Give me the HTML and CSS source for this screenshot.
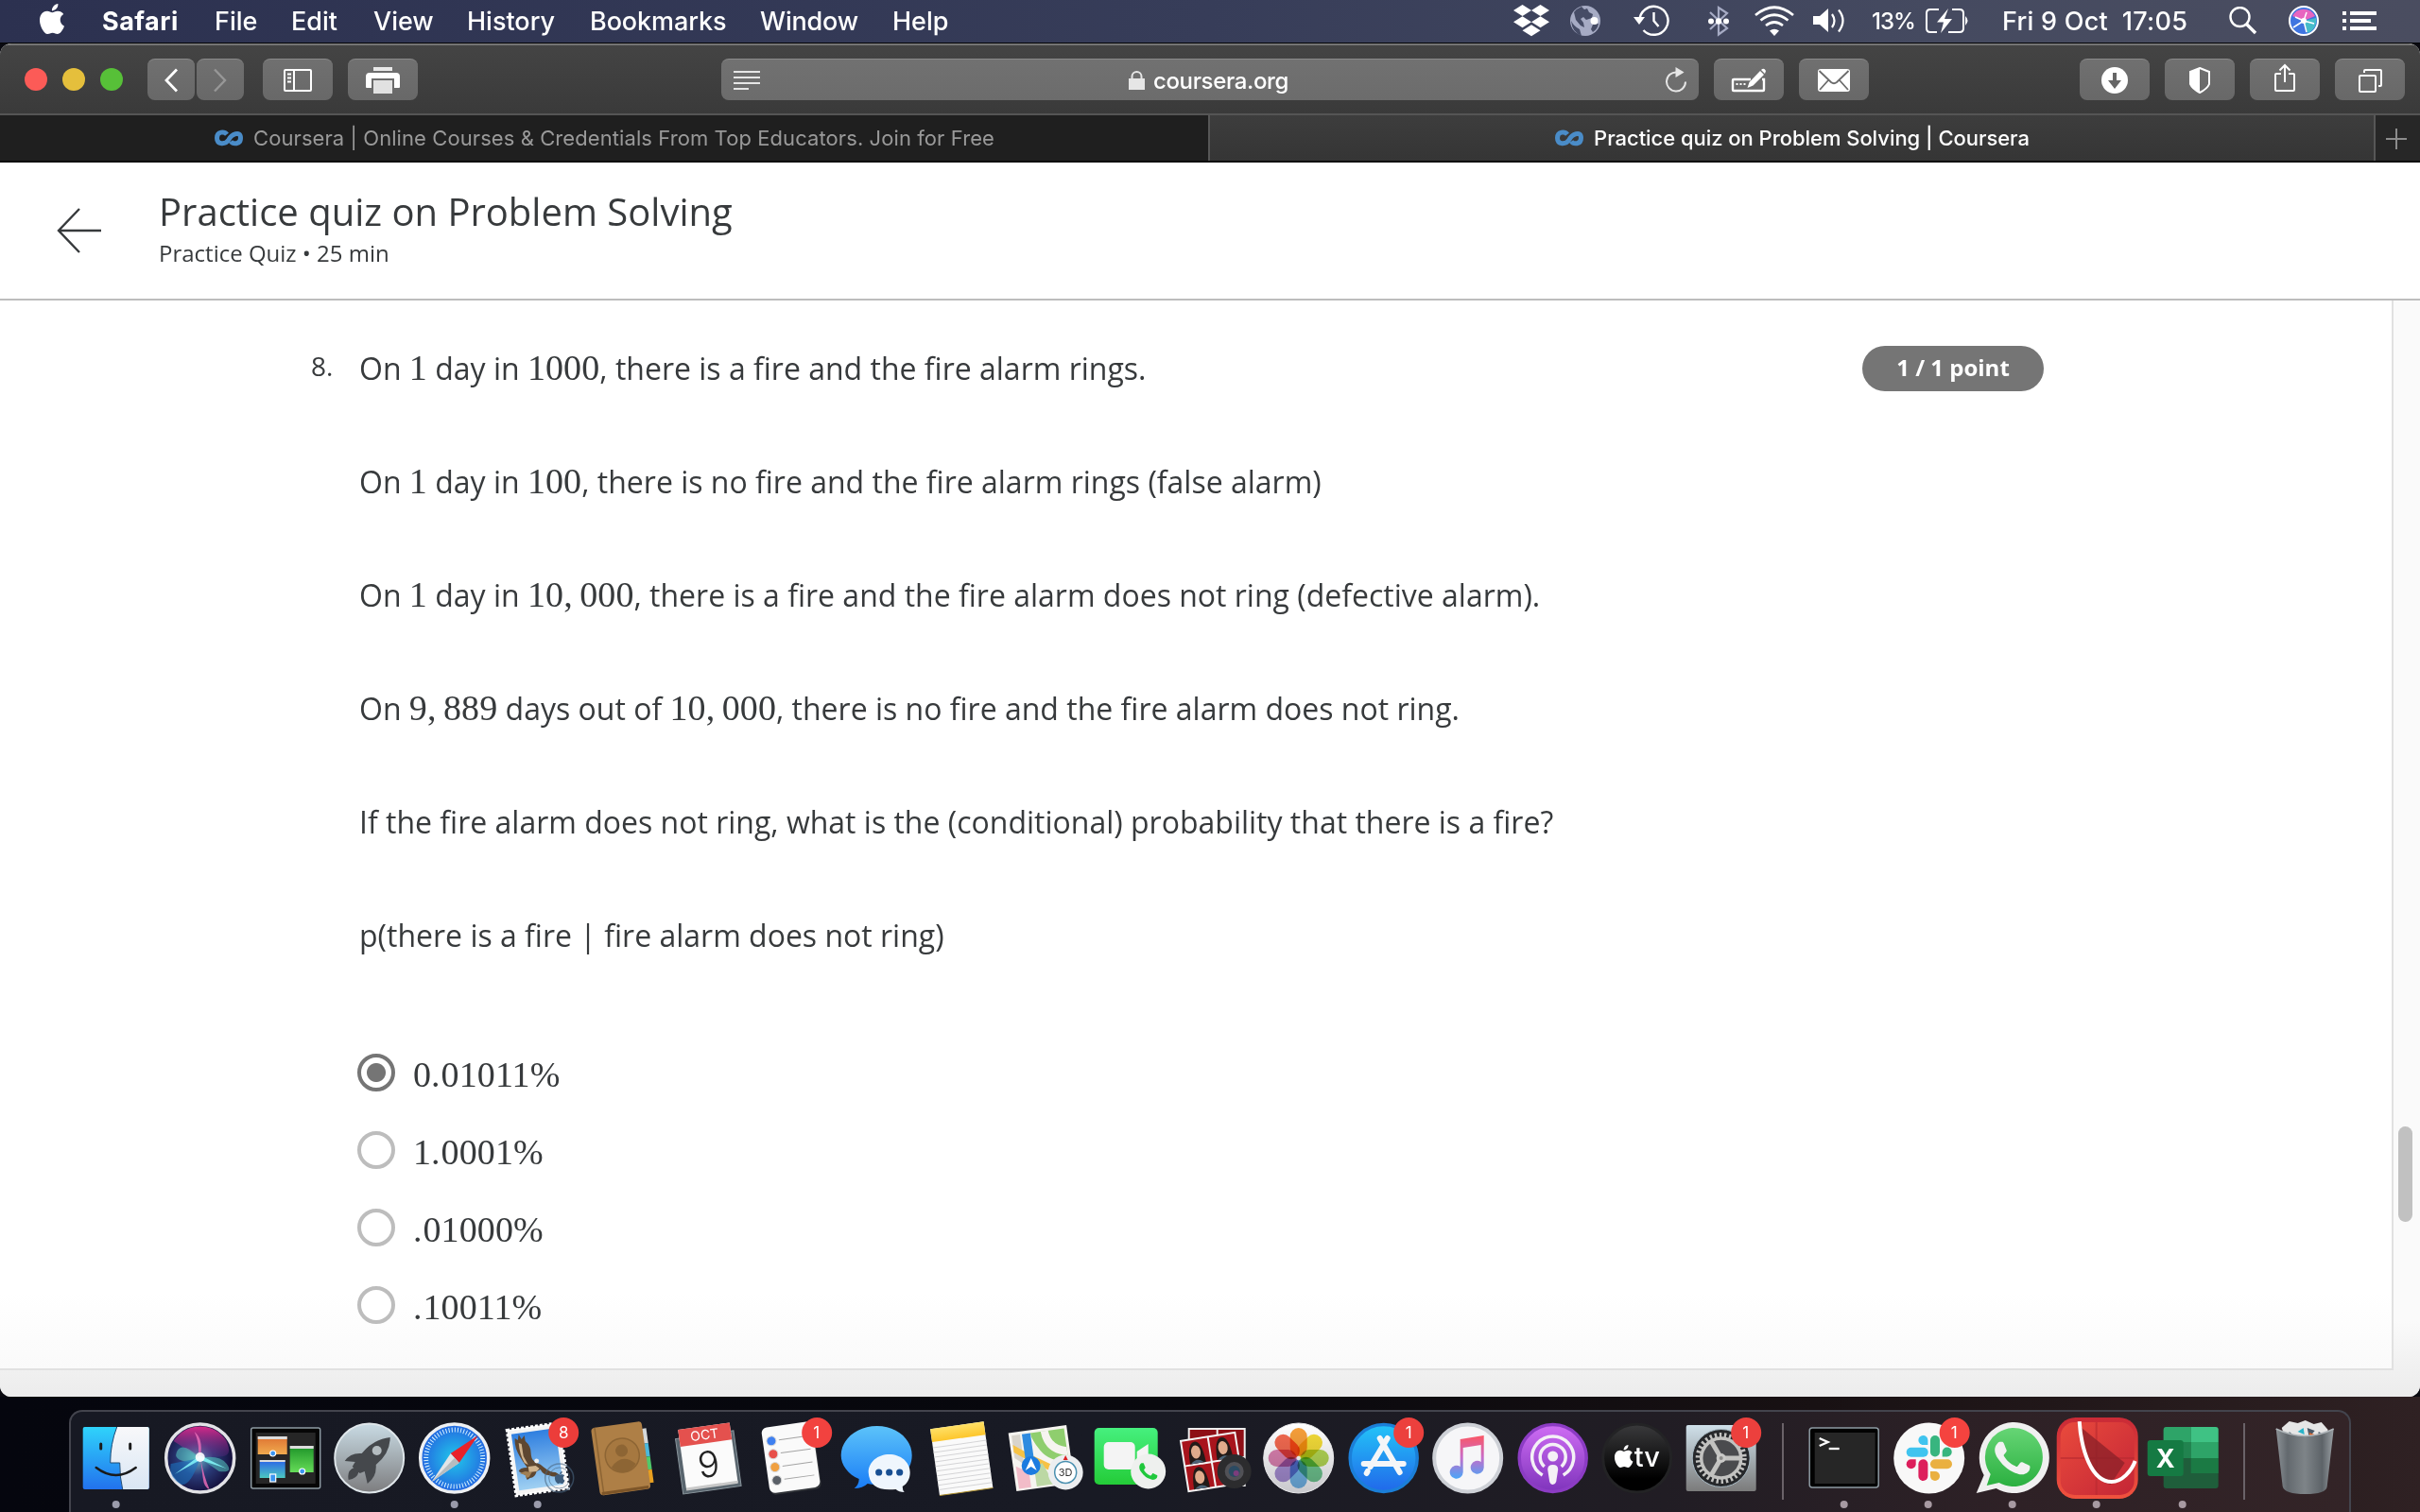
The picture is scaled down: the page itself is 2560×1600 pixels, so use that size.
FILE: index.html
```html
<!DOCTYPE html>
<html lang="en">
<head>
<meta charset="utf-8">
<title>Practice quiz on Problem Solving | Coursera</title>
<link rel="stylesheet" href="styles.css">
</head>
<body>
<svg class="defs" width="0" height="0" aria-hidden="true">
  <defs>
    <path id="apple" d="M12.152 6.896c-.948 0-2.415-1.078-3.96-1.04-2.04.027-3.91 1.183-4.961 3.014-2.117 3.675-.546 9.103 1.519 12.09 1.013 1.454 2.208 3.09 3.792 3.039 1.52-.065 2.09-.987 3.935-.987 1.831 0 2.35.987 3.96.948 1.637-.026 2.676-1.48 3.676-2.948 1.156-1.688 1.636-3.325 1.662-3.415-.039-.013-3.182-1.221-3.22-4.857-.026-3.04 2.48-4.494 2.597-4.559-1.429-2.09-3.623-2.324-4.39-2.376-2-.156-3.675 1.09-4.61 1.09zM15.53 3.83c.843-1.012 1.4-2.427 1.245-3.83-1.207.052-2.662.805-3.532 1.818-.78.896-1.454 2.338-1.273 3.714 1.338.104 2.715-.688 3.559-1.701"/>
    <path id="phone" d="M17.472 14.382c-.297-.149-1.758-.867-2.03-.967-.273-.099-.471-.148-.67.15-.197.297-.767.966-.94 1.164-.173.199-.347.223-.644.075-.297-.15-1.255-.463-2.39-1.475-.883-.788-1.48-1.761-1.653-2.059-.173-.297-.018-.458.13-.606.134-.133.298-.347.446-.52.149-.174.198-.298.298-.497.099-.198.05-.371-.025-.52-.075-.149-.669-1.612-.916-2.207-.242-.579-.487-.5-.669-.51-.173-.008-.371-.01-.57-.01-.198 0-.52.074-.792.372-.272.297-1.04 1.016-1.04 2.479 0 1.462 1.065 2.875 1.213 3.074.149.198 2.096 3.2 5.077 4.487.709.306 1.262.489 1.694.625.712.227 1.36.195 1.871.118.571-.085 1.758-.719 2.006-1.413.248-.694.248-1.289.173-1.413-.074-.124-.272-.198-.57-.347"/>
    <symbol id="coursera" viewBox="0 0 31 18"><path d="M13.5 5.2C11 2 3 1.6 3 9c0 7.400 9 7.200 12.300 2C18.500 5 28 .8 28 9c0 7.200-8 6.800-10.300 3.600" fill="none" stroke="#4a8cc8" stroke-width="5"/></symbol>
    <linearGradient id="gSilver" x1="0" y1="0" x2="0" y2="1"><stop offset="0" stop-color="#fff"/><stop offset="1" stop-color="#c8c8cc"/></linearGradient>
    <linearGradient id="gFinder" x1="0" y1="0" x2="0" y2="1"><stop offset="0" stop-color="#2fd3fb"/><stop offset="1" stop-color="#2272ee"/></linearGradient>
    <linearGradient id="gFace" x1="0" y1="0" x2="0" y2="1"><stop offset="0" stop-color="#f8f8fa"/><stop offset="1" stop-color="#d9e6f4"/></linearGradient>
    <radialGradient id="gSiri" cx=".45" cy=".5" r=".55"><stop offset="0" stop-color="#6fb6c8"/><stop offset=".45" stop-color="#2b3c7a"/><stop offset="1" stop-color="#120b36"/></radialGradient>
    <linearGradient id="gPink" x1="0" y1="0" x2="0" y2="1"><stop offset="0" stop-color="#d62a8a"/><stop offset="1" stop-color="#5a2a86" stop-opacity=".3"/></linearGradient>
    <linearGradient id="gOrange" x1="0" y1="0" x2="0" y2="1"><stop offset="0" stop-color="#de7232"/><stop offset="1" stop-color="#f0ab4e"/></linearGradient>
    <linearGradient id="gGreen" x1="0" y1="0" x2="0" y2="1"><stop offset="0" stop-color="#1d9328"/><stop offset="1" stop-color="#66dc58"/></linearGradient>
    <linearGradient id="gTeal" x1="0" y1="0" x2="0" y2="1"><stop offset="0" stop-color="#2a63e8"/><stop offset="1" stop-color="#4cc8c0"/></linearGradient>
    <linearGradient id="gLaunch" x1="0" y1="0" x2="0" y2="1"><stop offset="0" stop-color="#c9dbe4"/><stop offset="1" stop-color="#7d7d7f"/></linearGradient>
    <radialGradient id="gSafari"><stop offset="0" stop-color="#21c8ea"/><stop offset="1" stop-color="#2366e0"/></radialGradient>
    <linearGradient id="gSky" x1="0" y1="0" x2="0" y2="1"><stop offset="0" stop-color="#2f7fe0"/><stop offset="1" stop-color="#9fd0f2"/></linearGradient>
    <linearGradient id="gBubble" x1="0" y1="0" x2="0" y2="1"><stop offset="0" stop-color="#5cc3fa"/><stop offset="1" stop-color="#1a7df6"/></linearGradient>
    <linearGradient id="gYellow" x1="0" y1="0" x2="0" y2="1"><stop offset="0" stop-color="#ffe066"/><stop offset="1" stop-color="#fdc62c"/></linearGradient>
    <linearGradient id="gFt" x1="0" y1="0" x2="0" y2="1"><stop offset="0" stop-color="#46f07e"/><stop offset="1" stop-color="#24cc38"/></linearGradient>
    <linearGradient id="gStore" x1="0" y1="0" x2="0" y2="1"><stop offset="0" stop-color="#23c4f8"/><stop offset="1" stop-color="#2168ea"/></linearGradient>
    <linearGradient id="gNote" x1="0" y1="0" x2="0" y2="1"><stop offset="0" stop-color="#fb5664"/><stop offset=".5" stop-color="#c96cc8"/><stop offset="1" stop-color="#4aa6f8"/></linearGradient>
    <linearGradient id="gPod" x1="0" y1="0" x2="0" y2="1"><stop offset="0" stop-color="#cf6df4"/><stop offset="1" stop-color="#7f34bc"/></linearGradient>
    <linearGradient id="gTv" x1="0" y1="0" x2="0" y2="1"><stop offset="0" stop-color="#3a3a3c"/><stop offset=".8" stop-color="#000"/></linearGradient>
    <linearGradient id="gPrefs" x1="0" y1="0" x2="0" y2="1"><stop offset="0" stop-color="#cfe0ea"/><stop offset="1" stop-color="#7b7b7b"/></linearGradient>
    <linearGradient id="gWa" x1="0" y1="0" x2="0" y2="1"><stop offset="0" stop-color="#66d575"/><stop offset="1" stop-color="#2bb040"/></linearGradient>
    <linearGradient id="gRed" x1="0" y1="0" x2="1" y2="1"><stop offset="0" stop-color="#e94a3c"/><stop offset="1" stop-color="#c42636"/></linearGradient>
    <linearGradient id="gRedRim" x1="0" y1="0" x2="0" y2="1"><stop offset="0" stop-color="#c92a36"/><stop offset="1" stop-color="#f0523e"/></linearGradient>
    <linearGradient id="gBin" x1="0" y1="0" x2="1" y2="0"><stop offset="0" stop-color="#8c9297"/><stop offset=".2" stop-color="#63696e"/><stop offset=".5" stop-color="#7e8488"/><stop offset=".8" stop-color="#5d6368"/><stop offset="1" stop-color="#9aa0a4"/></linearGradient>
  </defs>
</svg>

<header class="menubar">
  <svg class="apple" width="32" height="32" viewBox="0 0 24 24" fill="#fff"><use href="#apple"/></svg>
  <nav class="menus">
    <span class="m-safari">Safari</span><span class="m-file">File</span><span class="m-edit">Edit</span><span class="m-view">View</span><span class="m-history">History</span><span class="m-bookmarks">Bookmarks</span><span class="m-window">Window</span><span class="m-help">Help</span>
  </nav>
  <div class="status">
    <svg width="38" height="34" viewBox="0 0 38 34" fill="#fff"><path d="M9.500 0l9.500 6-9.500 6L0 6zM28.500 0L38 6l-9.500 6L19 6zM9.500 12.300l9.500 6-9.500 6-9.500-6zM28.500 12.300l9.500 6-9.500 6-9.500-6zM19 21.300l9.500 6-9.500 6-9.500-6z"/></svg>
    <svg class="s-globe" width="32" height="34" viewBox="0 0 32 34"><circle cx="16" cy="17" r="16" fill="#a6abc4"/><path d="M4 8q3-4 8-6l3 3 3-1 2 4 4 2-1 4-6 2-3-3-3 2 3 4 1 5-4-2-5-6zM22 26l2-5 6-1q-1 6-6 9z" fill="#464c66"/><path d="M1 17q3 6 9 9l2 7Q2 29 1 17z" fill="#464c66"/><circle cx="25.500" cy="17" r="4" fill="#fff"/></svg>
    <svg class="s-time" width="38" height="34" viewBox="0 0 38 34"><path d="M6.500 17a15 15 0 1 1 4 10" fill="none" stroke="#fff" stroke-width="2.400"/><path d="M0 13h12l-6 8z" fill="#fff"/><path d="M21.500 8v9l5 6" fill="none" stroke="#fff" stroke-width="2.400"/></svg>
    <svg class="s-bt" width="22" height="34" viewBox="0 0 22 34"><path d="M2 8l18 17-9 6.500V3l9 6L2 26" fill="none" stroke="#a6abc4" stroke-width="2.200"/><g fill="#fff"><circle cx="3" cy="17.500" r="3"/><circle cx="11" cy="17.500" r="3.200"/><circle cx="19" cy="17.500" r="3"/></g></svg>
    <svg class="s-wifi" width="42" height="32" viewBox="0 0 42 32"><g fill="none" stroke="#fff" stroke-width="2.700"><path d="M1 10q20-16.500 40 0M6.500 15.500q14.500-11.500 29 0M12 21q9-7 18 0"/></g><path d="M16 26.500q5-3.500 10 0L21 32z" fill="#fff"/></svg>
    <svg class="s-vol" width="34" height="26" viewBox="0 0 34 26"><path d="M0 8h7l9-8v25l-9-8H0z" fill="#fff"/><g fill="none" stroke="#fff" stroke-width="2.200"><path d="M20 6q5 7 0 14M27 1.500q9 11 0 23"/></g></svg>
    <span class="pct">13%</span>
    <svg class="s-batt" width="47" height="26" viewBox="0 0 47 26"><path d="M14 1H5Q1 1 1 5v16q0 4 4 4h7M28 1h8q4 0 4 4v16q0 4-4 4H24" fill="none" stroke="#fff" stroke-width="2"/><path d="M24 0L12 14.500h7L16 26l12-15h-8zM42 8q5 4.500 0 10z" fill="#fff"/></svg>
    <span class="clock">Fri 9 Oct&nbsp; 17:05</span>
    <svg class="s-search" width="30" height="30" viewBox="0 0 30 30" fill="none" stroke="#fff"><circle cx="11.500" cy="11" r="10" stroke-width="2.400"/><path d="M18 18l10 10" stroke-width="3.400"/></svg>
    <svg class="s-siri" width="32" height="32" viewBox="0 0 32 32"><circle cx="16" cy="16" r="15" fill="#3f74e0" stroke="#fff" stroke-width="2"/><path d="M4 11a13.500 13.500 0 0 1 24 0l-12 5z" fill="#e765c0"/><path d="M29 13a14 14 0 0 1-9 16l-4-13z" fill="#46bcc9"/><path d="M16 16L5 23M16 16L7 12M16 16l3-9M16 16l11 3M16 16l3 12" stroke="#fff" stroke-width="1.500"/><circle cx="16" cy="16" r="3" fill="#fff"/></svg>
    <svg class="s-list" width="36" height="20" viewBox="0 0 36 20" fill="#fff"><path d="M0 0h4v4H0zM8 0h28v4H8zM0 8h4v4H0zM8 8h22v4H8zM0 16h4v4H0zM8 16h28v4H8z"/></svg>
  </div>
</header>

<main class="window">
  <div class="toolbar">
    <i class="light red"></i><i class="light amber"></i><i class="light green"></i>
    <div class="navs">
      <button class="btn small"><svg width="16" height="26" viewBox="0 0 16 26" fill="none" stroke="#fff" stroke-width="2.800"><path d="M14 1.500L3 13l11 11.500"/></svg></button>
      <button class="btn small"><svg width="16" height="26" viewBox="0 0 16 26" fill="none" stroke="#979797" stroke-width="2.400"><path d="M2 1.500L13 13 2 24.500"/></svg></button>
    </div>
    <button class="btn b-side"><svg width="30" height="24" viewBox="0 0 30 24" fill="none" stroke="#fff" stroke-width="2"><rect x="1" y="1" width="28" height="22" rx="1"/><path d="M11 1v22M4 5.500h4M4 9.500h4M4 13.500h4"/></svg></button>
    <button class="btn b-print"><svg width="38" height="30" viewBox="0 0 38 30" fill="#fff"><path d="M9 1h20v4H9z" opacity=".85"/><path d="M5 7h28q4 0 4 4v11q0 1-1 1h-5V13H7v10H2q-1 0-1-1V11q0-4 4-4z"/><path d="M9 15h20v14H9z" opacity=".8"/></svg></button>
    <div class="url">
      <svg width="28" height="20" viewBox="0 0 28 20" fill="#e6e6e6"><path d="M0 0h28v2H0zM0 6h28v2H0zM0 12h28v2H0zM0 18h16v2H0z"/></svg>
      <div class="host"><svg width="17" height="20" viewBox="0 0 17 20"><path d="M0 8h17v12H0z" fill="#e6e6e6"/><path d="M3.500 9V6a5 5 0 0 1 10 0v3" fill="none" stroke="#e6e6e6" stroke-width="2"/></svg><span>coursera.org</span></div>
      <svg width="22" height="27" viewBox="0 0 22 27"><path d="M12 5.500A10 10 0 1 0 21 15.500" fill="none" stroke="#e6e6e6" stroke-width="2"/><path d="M10.500 0v11l9-5.500z" fill="#e6e6e6"/></svg>
    </div>
    <button class="btn b-edit"><svg width="38" height="26" viewBox="0 0 38 26"><path d="M21 12H3q-1 0-1 1v10q0 1 1 1h31q1 0 1-1V12h-2" fill="none" stroke="#fff" stroke-width="2.400"/><path d="M5.500 16h2v2h-2zM9.500 16h2v2h-2zM13.500 16h2v2h-2zM17.500 21l2-6L31 3l4 4-11.500 11.500zM32 2q3-3 5 1l-1 3z" fill="#fff"/></svg></button>
    <button class="btn b-mail"><svg width="34" height="24" viewBox="0 0 34 24"><rect width="34" height="24" rx="3" fill="#fff"/><path d="M1.500 2l12.500 12q3 2.500 6 0L32.500 2M2 22l9-10M32 22l-9-10" fill="none" stroke="#6c6c6c" stroke-width="1.800"/></svg></button>
    <div class="right">
      <button class="btn"><svg width="28" height="28" viewBox="0 0 28 28"><circle cx="14" cy="14" r="14" fill="#fff"/><path d="M12 6h4v8h5l-7 9-7-9h5z" fill="#666"/></svg></button>
      <button class="btn"><svg width="24" height="28" viewBox="0 0 24 28"><path d="M12 1l10 4v13q-2 5-10 9-8-4-10-9V5z" fill="none" stroke="#fff" stroke-width="2"/><path d="M12 1v26q-8-4-10-9V5z" fill="#fff"/></svg></button>
      <button class="btn"><svg class="up" width="24" height="31" viewBox="0 0 24 31" fill="none" stroke="#fff" stroke-width="2"><path d="M8 11H3q-1 0-1 1v16q0 1 1 1h18q1 0 1-1V12q0-1-1-1h-5M12 20V2M6.500 7.500L12 2l5.500 5.500"/></svg></button>
      <button class="btn"><svg width="26" height="26" viewBox="0 0 26 26" fill="none" stroke="#fff" stroke-width="2"><rect x="2" y="8" width="17" height="17" rx="1"/><path d="M7 5V3q0-1 1-1h16q1 0 1 1v15q0 1-1 1h-2"/></svg></button>
    </div>
  </div>
  <div class="tabs">
    <div class="tab"><svg width="32" height="18"><use href="#coursera"/></svg><span class="t1">Coursera | Online Courses &amp; Credentials From Top Educators. Join for Free</span></div>
    <div class="tab active"><svg width="32" height="18"><use href="#coursera"/></svg><span class="t2">Practice quiz on Problem Solving | Coursera</span></div>
    <div class="plus"><svg width="22" height="22" viewBox="0 0 22 22" stroke="#8c8c8c" stroke-width="2"><path d="M11 0v22M0 11h22"/></svg></div>
  </div>
  <div class="quiz-head">
    <svg width="48" height="48" viewBox="0 0 48 48" fill="none" stroke="#373a3c" stroke-width="2.400"><path d="M24 1L2 24l22 23M2 24h45"/></svg>
    <div><h1>Practice quiz on Problem Solving</h1><p>Practice Quiz • 25 min</p></div>
  </div>
  <div class="page">
    <section class="sheet">
      <div class="question">
        <span class="num">8.</span>
        <div class="prompt">
          <p>On <b>1</b> day in <b>1000</b>, there is a fire and the fire alarm rings.</p>
          <p>On <b>1</b> day in <b>100</b>, there is no fire and the fire alarm rings (false alarm)</p>
          <p>On <b>1</b> day in <b>10<i>,</i>000</b>, there is a fire and the fire alarm does not ring (defective alarm).</p>
          <p>On <b>9<i>,</i>889</b> days out of <b>10<i>,</i>000</b>, there is no fire and the fire alarm does not ring.</p>
          <p>If the fire alarm does not ring, what is the (conditional) probability that there is a fire?</p>
          <p>p(there is a fire | fire alarm does not ring)</p>
        </div>
        <span class="points">1 / 1 point</span>
      </div>
      <ul class="options">
        <li><i class="radio on"></i><span>0<i>.</i>01011%</span></li>
        <li><i class="radio"></i><span>1<i>.</i>0001%</span></li>
        <li><i class="radio"></i><span><i>.</i>01000%</span></li>
        <li><i class="radio"></i><span><i>.</i>10011%</span></li>
      </ul>
    </section>
    <aside class="gutter"><div class="thumb"></div></aside>
  </div>
</main>

<footer class="desktop">
  <div class="dock">
    <!-- Finder -->
    <svg class="ic" viewBox="-44.700 -49 89.400 106"><rect x="-35" y="-33" width="70" height="66" rx="2" fill="url(#gFinder)"/><path d="M1-33q-7 18-7 38H4q0 16 3 28h26q2 0 2-2v-62q0-2-2-2z" fill="url(#gFace)"/><path d="M1-33q-7 18-7 38H4q0 16 3 28" fill="none" stroke="#1c4a74" stroke-width="1"/><path d="M-16-15v5M15-15v5" stroke="#1a1a1a" stroke-width="3" stroke-linecap="round"/><path d="M-21 10q21 16 42 0" fill="none" stroke="#1a1a1a" stroke-width="2.500" stroke-linecap="round"/><circle cy="49" r="4" fill="#9a9bab"/></svg>
    <!-- Siri -->
    <svg class="ic" viewBox="-44.700 -49 89.400 106"><circle r="36" fill="url(#gSiri)" stroke="#e2e2e6" stroke-width="3.500"/><path d="M-28-18A33 33 0 0 1 28-18Q34-4 25-2L0 0z" fill="url(#gPink)"/><path d="M0 0Q-18-18-24-8t12 12zM0 0q20-4 28 6t-8 8z" fill="#55c7c0" opacity=".55"/><path d="M0 0Q-10 30-20 28-34 20-31 6z" fill="#1d73c0" opacity=".6"/><path d="M0-2Q4 20 10 33q-6-2-7-12zM0 0Q4-20-6-28 0-14-2 0z" fill="#e66bb6" opacity=".85"/><path d="M-27 17L0-3l28 14L0 2z" fill="#8ff" opacity=".8"/><circle cy="-1" r="5" fill="#fff" opacity=".9"/></svg>
    <!-- Mission Control -->
    <svg class="ic" viewBox="-44.700 -49 89.400 106"><rect x="-36" y="-32" width="73" height="64" rx="2" fill="#060606" stroke="#8d9aa2" stroke-width="1.500"/><rect x="-31" y="-27" width="63" height="54" fill="#262626"/><rect x="-29" y="-23" width="31" height="19" fill="url(#gOrange)"/><path d="M-29-23H2v3h-31z" fill="#ddd"/><rect x="5" y="-13" width="25" height="28" fill="url(#gGreen)"/><path d="M5-13h25v3H5z" fill="#ddd"/><rect x="-27" y="2" width="27" height="19" fill="url(#gTeal)"/><path d="M-27 2H0v2h-27z" fill="#ddd"/><g fill="#3a95f0" stroke="#fff" stroke-width="1.200"><circle cx="-13" cy="-5" r="3"/><circle cx="18" cy="14" r="3"/><rect x="-16" y="17" width="6" height="8"/></g></svg>
    <!-- Launchpad -->
    <svg class="ic" viewBox="-44.700 -49 89.400 106"><circle r="36.500" fill="url(#gLaunch)" stroke="#dfe6ea" stroke-width="2"/><path d="M22-22Q4-20-8-5-20-6-26 3l11 1-3 5 8 7 5-2 3 13Q8 20 7 7 22-5 22-22zM-16 10q-8 3-6 13 9-1 11-9z" fill="#45484c"/><circle cx="8" cy="-8" r="5" fill="#b4bcc0"/></svg>
    <!-- Safari -->
    <svg class="ic" viewBox="-44.700 -49 89.400 106"><circle r="36" fill="url(#gSafari)" stroke="#eef0f2" stroke-width="3.500"/><circle r="30" fill="none" stroke="#d8f2ff" stroke-width="5" stroke-dasharray="1 2.140"/><path d="M25-24L5 5-4-5z" fill="#e8222a"/><path d="M-24 25L-4-5 5 5z" fill="#e2e4e6"/><path d="M-24 25L0 0l5 5z" fill="#b6bcc0"/><circle cy="49" r="4" fill="#9a9bab"/></svg>
    <!-- Mail -->
    <svg class="ic" viewBox="-44.700 -49 89.400 106"><g transform="rotate(-8)"><rect x="-29" y="-34" width="56" height="70" fill="#f4f4f4" stroke="#fff" stroke-width="3" stroke-dasharray="3 2"/><rect x="-25" y="-29" width="47" height="60" fill="url(#gSky)"/></g><path d="M-25-21l3 2 1-6 3 5 3-4 1 6q6 5 6 13 0 5 3 8l3 2q4 1 8 5 6 5 12 5l5 3q-6 3-12 0-6 0-9-6l-4 2q-2 7-7 7l-3 2-2-5-7-4q1-4 9-4-4-5-8-12-6-10-5-19z" fill="#5e4731"/><path d="M-21-16l3 1 2 13 5 9-4-2q-5-9-6-21zM-11 9l8-1 4 3-3 3-8 1z" fill="#d0b48e"/><path d="M-14 14l7 1-3 5-3 1-1-3-6-2z" fill="#a08054"/><circle cx="-2" cy="3" r="2.500" fill="#eee"/><circle cx="22" cy="21" r="15" fill="none" stroke="#4a6580" stroke-width="1.500" opacity=".6"/><circle cx="22" cy="21" r="11" fill="none" stroke="#4a6580" opacity=".6"/><svg x="16" y="14" width="13" height="13" viewBox="0 0 24 24" fill="#3d5c7c"><use href="#apple"/></svg><circle cx="26.500" cy="-27" r="16" fill="#ec3d3a"/><text class="bt" x="26.500" y="-21">8</text><circle cx="-1" cy="49" r="4" fill="#9a9bab"/></svg>
    <!-- Contacts -->
    <svg class="ic" viewBox="-44.700 -49 89.400 106"><g transform="rotate(-8)"><path d="M24-28h5v16h-5z" fill="#d4d8da"/><path d="M24-12h5V2h-5z" fill="#4bb9dc"/><path d="M24 2h5v14h-5z" fill="#50c96a"/><path d="M24 16h5v14h-5z" fill="#e8a020"/><rect x="-29" y="-36" width="54" height="72" rx="4" fill="#ae7f46"/><path d="M-25-36v72" stroke="#8d6534" stroke-width="1.500"/><path d="M-27 34h50" stroke="#7d5528" stroke-width="3"/><circle cy="-3" r="18" fill="#a67840" stroke="#8d6534" stroke-width="1.500"/><circle cy="-8" r="6.500" fill="#8d6534"/><path d="M-13 8q13-14 26 0-6 7-13 7T-13 8z" fill="#8d6534"/></g></svg>
    <!-- Calendar -->
    <svg class="ic" viewBox="-44.700 -49 89.400 106"><g transform="rotate(-8)"><rect x="-31" y="-25" width="62" height="59" fill="#59656e" stroke="#8b979e"/><rect x="-27" y="-34" width="55" height="64" fill="#fbfbfb"/><path d="M-27-34h55v18h-55z" fill="#e4514e"/><path d="M-27 28h55v3h-55z" fill="#c8c8c8"/><text class="oct" x="0" y="-20">OCT</text><text class="day" x="0" y="20">9</text></g></svg>
    <!-- Reminders -->
    <svg class="ic" viewBox="-44.700 -49 89.400 106"><g transform="rotate(-8)"><rect x="-27" y="-34" width="54" height="70" rx="6" fill="#303338"/><rect x="-28" y="-36" width="54" height="70" rx="6" fill="#fafafa"/><path d="M-11-21h32M-11-7h32M-11 7h32M-11 21h32" stroke="#a4a4a4"/><g stroke="#d8d8d8"><circle cx="-19" cy="-21" r="5" fill="#3f80f0"/><circle cx="-19" cy="-7" r="5" fill="#e8504a"/><circle cx="-19" cy="7" r="5" fill="#f0a040"/><circle cx="-19" cy="21" r="5" fill="#5a6068"/></g></g><circle cx="26.500" cy="-27" r="16" fill="#f2423f"/><text class="bt" x="26" y="-21">1</text></svg>
    <!-- Messages -->
    <svg class="ic" viewBox="-44.700 -49 89.400 106"><path d="M0-34c21 0 37 14 37 31S22 28 0 28q-6 0-10-1-5 5-14 5 5-4 5-10C-31 17-38 7-38-3c0-17 17-31 38-31z" fill="url(#gBubble)"/><path d="M13-4c12 0 22 8 22 19 0 7-3 12-8 15q0 4 2 6-6 0-9-3-28 3-29-18C-9 4 1-4 13-4z" fill="#eff6fd"/><g fill="#184f92"><circle cx="2" cy="15" r="3.600"/><circle cx="13" cy="15" r="3.600"/><circle cx="24" cy="15" r="3.600"/></g></svg>
    <!-- Notes -->
    <svg class="ic" viewBox="-44.700 -49 89.400 106"><g transform="rotate(-8)"><rect x="-28" y="-35" width="57" height="71" fill="#fafafa"/><path d="M-28-35h57v14h-57z" fill="url(#gYellow)"/><path d="M-28-15h57M-28-10h57M-28-5h57M-28 0h57M-28 5h57M-28 10h57M-28 15h57M-28 20h57M-28 25h57M-28 30h57" stroke="#d4d4d6"/><path d="M-28 36h57" stroke="#b29330"/></g></svg>
    <!-- Maps -->
    <svg class="ic" viewBox="-44.700 -49 89.400 106"><g transform="translate(-4 0) rotate(-8)"><rect x="-31" y="-31" width="62" height="62" fill="#f6f4f0"/><path d="M-28-28h9v32l-9-8z" fill="#d8d4cc"/><path d="M-28 5l13 8v16h-13z" fill="#f2bcc8"/><path d="M-8-28H28V8Q8 5 0-8t-8-20z" fill="#8fce6e"/><path d="M3-28Q4-4 28 1v-9Q12-12 11-28z" fill="#f6f4f0"/><path d="M-28-18l16 12L28 20v8L-12 2l-16-12z" fill="#f7c244"/><path d="M-17-28h9V6h-9z" fill="#2f8be0"/><path d="M-9 10L0 5l10 24H-9z" fill="#bcd8a4"/></g><circle cx="-15" cy="8" r="10" fill="#1b7be0"/><path d="M-15 0l6 13-6-4-6 4z" fill="#fff"/><circle cx="21.500" cy="15" r="18.500" fill="#eceef0"/><circle cx="21.500" cy="15" r="11.500" fill="#fff" stroke="#4a90b0" stroke-width="1.500"/><path d="M21.500-3l2.500 5h-5z" fill="#d22"/><text class="d3" x="21.500" y="19">3D</text></svg>
    <!-- FaceTime -->
    <svg class="ic" viewBox="-44.700 -49 89.400 106"><rect x="-38" y="-32" width="67" height="60" rx="5" fill="url(#gFt)"/><rect x="-28" y="-17" width="33" height="29" rx="5" fill="#f4f4f4"/><path d="M7-7L19-15v20L7 2z" fill="#f4f4f4"/><circle cx="19" cy="14" r="18.500" fill="#eef0ee"/><svg x="0" y="-5" width="38" height="38" viewBox="0 0 24 24" fill="#1fc83c"><use href="#phone"/></svg></svg>
    <!-- Photo Booth -->
    <svg class="ic" viewBox="-44.700 -49 89.400 106"><rect x="-28" y="-32" width="61" height="62" fill="#eee"/><rect x="-26" y="-30" width="28" height="28" fill="#8e0f16"/><rect x="4" y="-30" width="27" height="28" fill="#8e0f16"/><g transform="translate(-3 3) rotate(-9)"><rect x="-30" y="-27" width="60" height="56" fill="#f4f4f4"/><rect x="-28" y="-25" width="27" height="25" fill="#a8141c"/><rect x="1" y="-25" width="27" height="25" fill="#a8141c"/><rect x="-28" y="2" width="27" height="25" fill="#a8141c"/><rect x="1" y="2" width="27" height="25" fill="#a8141c"/><path d="M-23 0q0-23 8-23t9 23zM6 0q0-23 8-23t9 23zM-23 27q0-23 8-23t9 23z" fill="#231a18"/><g fill="#e0ab8c"><ellipse cx="-15" cy="-12" rx="5" ry="7"/><ellipse cx="14" cy="-12" rx="5" ry="7"/><ellipse cx="-15" cy="15" rx="5" ry="7"/></g><path d="M-22 0q7-7 14 0zM7 0q7-7 14 0zM-22 27q7-7 14 0z" fill="#4c6478"/></g><circle cx="21" cy="14" r="18" fill="#2c2c2e"/><circle cx="21" cy="14" r="10" fill="#515156"/><circle cx="21" cy="14" r="6" fill="#2b4a62"/><circle cx="23" cy="16" r="3" fill="#7c3d7c"/></svg>
    <!-- Photos -->
    <svg class="ic" viewBox="-44.700 -49 89.400 106"><circle r="37" fill="url(#gSilver)" stroke="#e8e8ea"/><g class="petals"><rect x="-9" y="-32" width="18" height="30" rx="9" fill="#f8a03a"/><rect x="-9" y="-32" width="18" height="30" rx="9" fill="#f4dc38" transform="rotate(45)"/><rect x="-9" y="-32" width="18" height="30" rx="9" fill="#b4d854" transform="rotate(90)"/><rect x="-9" y="-32" width="18" height="30" rx="9" fill="#70c890" transform="rotate(135)"/><rect x="-9" y="-32" width="18" height="30" rx="9" fill="#74b8ea" transform="rotate(180)"/><rect x="-9" y="-32" width="18" height="30" rx="9" fill="#a890d4" transform="rotate(225)"/><rect x="-9" y="-32" width="18" height="30" rx="9" fill="#dc82b0" transform="rotate(270)"/><rect x="-9" y="-32" width="18" height="30" rx="9" fill="#f46a50" transform="rotate(315)"/></g></svg>
    <!-- App Store -->
    <svg class="ic" viewBox="-44.700 -49 89.400 106"><circle r="35.500" fill="url(#gStore)" stroke="#1b7fd8" stroke-width="3.500"/><g stroke="#f4f6f8" stroke-width="6" stroke-linecap="round"><path d="M-4-21L17 15M4-21L-14 9M-17 14l-1 2M-21 6H21"/></g><circle cx="26.500" cy="-27" r="16" fill="#ec403d"/><text class="bt" x="26.500" y="-21">1</text></svg>
    <!-- Music -->
    <svg class="ic" viewBox="-44.700 -49 89.400 106"><circle r="35.500" fill="#f6f6f8" stroke="#cdd0d6" stroke-width="4"/><path d="M-8-20l25-4v34a7 7 0 1 1-3-6v-18L-5-11v26a7 7 0 1 1-3-6z" fill="url(#gNote)"/></svg>
    <!-- Podcasts -->
    <svg class="ic" viewBox="-44.700 -49 89.400 106"><circle r="35.500" fill="url(#gPod)" stroke="#8c3cc4" stroke-width="3.500"/><g fill="none" stroke="#f4f0f6" stroke-width="3.500"><path d="M-11 18a22 22 0 1 1 22 0M-9 9a13.500 13.500 0 1 1 18 0"/></g><circle cy="-2" r="5.500" fill="#f4f0f6"/><path d="M-5.500 12q0-5 5.500-5t5.500 5l-2 13q-1 3-3.500 3t-3.500-3z" fill="#f4f0f6"/></svg>
    <!-- TV -->
    <svg class="ic" viewBox="-44.700 -49 89.400 106"><circle r="36" fill="url(#gTv)" stroke="#232325" stroke-width="3"/><svg x="-26" y="-14" width="24" height="24" viewBox="0 0 24 24" fill="#fff"><use href="#apple"/></svg><text class="tv" x="-3" y="9">tv</text></svg>
    <!-- System Preferences -->
    <svg class="ic" viewBox="-44.700 -49 89.400 106"><rect x="-37" y="-35" width="74" height="70" rx="2" fill="url(#gPrefs)"/><circle r="30.500" fill="#26282b" stroke="#a9bac4"/><circle r="21" fill="#4a4b4e" stroke="#c2c2c0" stroke-width="3.500"/><circle r="24.500" fill="none" stroke="#c2c2c0" stroke-width="5" stroke-dasharray="2.400 2.730"/><path d="M0 0h21M0 0l-10.500-18M0 0l-10.500 18" stroke="#c2c2c0" stroke-width="5"/><circle r="5" fill="#c9c9c7"/><circle r="2" fill="#8c8c8a"/><circle cx="26.500" cy="-27" r="16" fill="#ec403d"/><text class="bt" x="26" y="-21">1</text></svg>
    <i class="sep"></i>
    <!-- Terminal -->
    <svg class="ic" viewBox="-44.700 -49 89.400 106"><rect x="-36.500" y="-32" width="73" height="63" rx="3" fill="#020202" stroke="#8d9aa2" stroke-width="1.500"/><rect x="-31" y="-27" width="64" height="54" fill="#262626"/><path d="M-26-21l9 4-9 4" fill="none" stroke="#fff" stroke-width="2.300"/><path d="M-16-10h11" stroke="#fff" stroke-width="2.300"/><circle cx="0" cy="49" r="4" fill="#a79aa2"/></svg>
    <!-- Slack -->
    <svg class="ic" viewBox="-44.700 -49 89.400 106"><circle r="37.500" fill="#f8f8f8"/><g fill="#40c4ef"><rect x="-24" y="-11.300" width="23" height="10" rx="5"/><path d="M-1.300-14h-5a5 5 0 1 1 5-5z"/></g><g fill="#38b57f"><rect x="1.300" y="-24" width="10" height="22.500" rx="5"/><path d="M14-1.500v-5a5 5 0 1 1 5 5z"/></g><g fill="#dd1f5c"><rect x="-11.300" y="1.300" width="10" height="22.700" rx="5"/><path d="M-14 1.300v5a5 5 0 1 1-5-5z"/></g><g fill="#eab040"><rect x="1.300" y="1.300" width="23" height="10" rx="5"/><path d="M1.300 14h5a5 5 0 1 1-5 5z"/></g><circle cx="27" cy="-27" r="16" fill="#f5433f"/><text class="bt" x="26.500" y="-21">1</text><circle cx="-1" cy="49" r="4" fill="#a79aa2"/></svg>
    <!-- WhatsApp -->
    <svg class="ic" viewBox="-43.700 -49 89.400 106"><path d="M0-38a37.500 37.500 0 1 1-17 70l-21 5 8-19A37.500 37.500 0 0 1 0-38z" fill="#f0f0f0"/><path d="M0-32a31 31 0 1 1-14 58l-13 3 4-12A31 31 0 0 1 0-32z" fill="url(#gWa)"/><svg x="-37" y="-37" width="74" height="74" viewBox="0 0 24 24" fill="#f2f2f2"><use href="#phone"/></svg><circle cx="0" cy="49" r="4" fill="#a79aa2"/></svg>
    <!-- Graphing app -->
    <svg class="ic" viewBox="-44.700 -49 89.400 106"><rect x="-43" y="-43" width="86" height="86" rx="20" fill="url(#gRedRim)"/><rect x="-39" y="-38" width="78" height="77" rx="15" fill="url(#gRed)"/><path d="M-39 0h78M-1-38v77" stroke="#b82a30" stroke-width="2" opacity=".6"/><path d="M-19-34L29 5 14 28Q0 25-9 6z" fill="#8a2028" opacity=".75"/><path d="M-19-39C-17-8-6 25 15 25 26 25 36 14 40 3" fill="none" stroke="#fff" stroke-width="4"/><circle cx="-1" cy="49" r="4" fill="#a79aa2"/></svg>
    <!-- Excel -->
    <svg class="ic" viewBox="-44.700 -49 89.400 106"><rect x="-20" y="-33" width="58" height="65" rx="3" fill="#1f5e3b"/><path d="M-20-17V-30q0-3 3-3H9v16z" fill="#2ea468"/><path d="M9-33h26q3 0 3 3v13H9z" fill="#3fc284"/><path d="M-20-17H9V0h-29z" fill="#21834f"/><path d="M9-17h29V0H9z" fill="#2ea468"/><path d="M9 0h29v16H9z" fill="#1b7a44"/><rect x="-37" y="-19" width="38" height="38" rx="3" fill="#157a43"/><text class="xl" x="-18" y="10">X</text><circle cx="0" cy="49" r="4" fill="#a79aa2"/></svg>
    <i class="sep"></i>
    <!-- Trash -->
    <svg class="ic" viewBox="-44.700 -49 89.400 106"><path d="M-25-32l8-7 9 2 8-3 9 4 8-2 7 8-4 12h-40z" fill="#e6e6e6"/><path d="M-17-28l6 5-7 4zM2-32l8 3-6 7zM14-28l6 3-7 6z" fill="#4a5866"/><path d="M-8-28l6-4 1 7z" fill="#29b3c8"/><path d="M4-27l6 2-5 4z" fill="#d8642c"/><path d="M-31-31Q0-16 30-31L23 30Q22 38 0 38T-24 30z" fill="url(#gBin)"/><path d="M-31-31Q0-16 30-31" fill="none" stroke="#aeb4b8" stroke-width="1.500"/></svg>
  </div>
</footer>
</body>
</html>
```
FILE: styles.css
```css
* { box-sizing: border-box; }
body {
  margin: 0;
  width: 2560px;
  height: 1600px;
  overflow: hidden;
  display: flex;
  flex-direction: column;
  background: #0a0a10;
  font-family: Inter, "Liberation Sans", sans-serif;
}
.defs { position: absolute; }
svg { display: block; flex: none; }

/* macOS menu bar */
.menubar {
  height: 46px;
  flex: none;
  display: flex;
  align-items: flex-start;
  background: linear-gradient(90deg, #2c3150, #373d59 50%, #454a60 80%, #4a4d60);
  border-bottom: 1px solid #050507;
  color: #fff;
  font-size: 27px;
  font-weight: 500;
  line-height: 45px;
  white-space: nowrap;
}
.apple { margin: 4px 0 0 39px; }
.menus { display: flex; padding-left: 37px; }
.m-safari { width: 119px; font-weight: 700; letter-spacing: .5px; }
.m-file { width: 81px; }
.m-edit { width: 87px; }
.m-view { width: 99px; }
.m-history { width: 130px; }
.m-bookmarks { width: 180px; letter-spacing: -.1px; }
.m-window { width: 140px; letter-spacing: -.2px; }
.status {
  margin-left: auto;
  width: 959px;
  height: 44px;
  display: flex;
  align-items: center;
}
.s-globe { margin-left: 22px; }
.s-time { margin-left: 35px; }
.s-bt { margin-left: 41px; }
.s-wifi { margin-left: 27px; }
.s-vol { margin-left: 20px; }
.pct { width: 56px; margin-left: 28px; font-size: 24px; letter-spacing: -1px; }
.s-batt { margin-left: 1px; }
.clock { width: 239px; margin-left: 34px; letter-spacing: .25px; }
.s-search { margin-left: 1px; }
.s-siri { margin-left: 33px; }
.s-list { margin-left: 25px; }

/* Safari window */
.window {
  height: 1432px;
  flex: none;
  display: flex;
  flex-direction: column;
  overflow: hidden;
  border-radius: 12px;
  background: #fff;
}
.toolbar {
  height: 76px;
  flex: none;
  display: flex;
  align-items: center;
  padding-left: 26px;
  border-top: 2px solid #747474;
  border-bottom: 2px solid #555;
  background: linear-gradient(#444, #3a3a3a);
}
.light { width: 24px; height: 24px; border-radius: 50%; margin-right: 16px; }
.red { background: #fc5b57; }
.amber { background: #e5bf3c; }
.green { background: #57c038; }
.navs { display: flex; gap: 2px; margin-left: 10px; }
.btn {
  width: 74px;
  height: 44px;
  padding: 0;
  display: flex;
  align-items: center;
  justify-content: center;
  border: 0;
  border-top: 1px solid #8a8a8a;
  border-radius: 8px;
  background: linear-gradient(#707070, #686868);
}
.small { width: 50px; }
.b-side { margin-left: 20px; }
.b-print { margin-left: 16px; }
.url {
  width: 1034px;
  height: 44px;
  margin-left: 321px;
  padding: 0 13px;
  display: flex;
  align-items: center;
  justify-content: space-between;
  border-top: 1px solid #8a8a8a;
  border-radius: 8px;
  background: linear-gradient(#717171, #6c6c6c);
}
.host {
  display: flex;
  align-items: center;
  gap: 9px;
  padding: 1px 9px 0 0;
  color: #fff;
  font-size: 24px;
  font-weight: 500;
  letter-spacing: -.35px;
}
.b-edit { margin-left: 16px; }
.b-mail { margin-left: 16px; }
.right { display: flex; gap: 16px; margin-left: auto; padding-right: 16px; }
.up { margin-bottom: 4px; }

.tabs {
  height: 50px;
  flex: none;
  display: flex;
  border-bottom: 2px solid #090909;
  background: #1f1f1f;
  font-size: 22px;
  white-space: nowrap;
}
.tab {
  width: 1278px;
  display: flex;
  align-items: center;
  justify-content: center;
  gap: 10px;
  padding-bottom: 1px;
  color: #999;
}
.t1 { letter-spacing: .08px; }
.t2 { letter-spacing: -.04px; }
.tab.active {
  width: 1235px;
  border: 2px solid #575757;
  border-width: 0 2px;
  background: linear-gradient(#3d3d3d, #353535);
  color: #fff;
  font-weight: 500;
}
.plus { width: 47px; display: flex; align-items: center; justify-content: center; background: #272727; padding: 1px 3px 0 0; }

/* Quiz page */
.quiz-head {
  height: 146px;
  flex: none;
  display: flex;
  align-items: center;
  gap: 60px;
  padding-left: 60px;
  border-bottom: 2px solid #bdbdbd;
  color: #373a3c;
  font-family: "Open Sans", sans-serif;
}
.quiz-head h1 { margin: -8px 0 0; font-size: 40px; font-weight: 400; line-height: 56px; white-space: nowrap; }
.quiz-head p { margin: 0; font-size: 24px; line-height: 32px; }
.page { flex: 1; display: flex; background: linear-gradient(#fafafa 1080px, #f2f2f2 1120px, #ececec); }
.sheet {
  width: 2532px;
  height: 1132px;
  padding: 48px 0 0 329px;
  background: linear-gradient(#fff 1050px, #fafafa);
  border: 2px solid #e1e1e1;
  border-width: 0 2px 2px 0;
  font-family: "Open Sans", sans-serif;
  color: #373a3c;
}
.question { display: flex; align-items: flex-start; }
.num { width: 51px; font-size: 28px; line-height: 43px; }
.prompt { width: 1590px; font-size: 32px; line-height: 48px; white-space: nowrap; }
.prompt p { margin: 0 0 72px; }
.prompt b { font: 400 38px/0 "Liberation Serif", serif; letter-spacing: .08px; }
.prompt b i { font-style: normal; margin-right: 7.500px; }
.points {
  width: 192px;
  height: 48px;
  border-radius: 24px;
  background: #757575;
  color: #fff;
  font-size: 24px;
  font-weight: 700;
  line-height: 46px;
  text-align: center;
}
.options { list-style: none; margin: 8px 0 0 49px; padding: 0; }
.options li { height: 82px; display: flex; align-items: center; gap: 19px; }
.options span { font: 38px/44px "Liberation Serif", serif; padding-top: 3px; letter-spacing: .1px; }
.options span i { font-style: normal; letter-spacing: 1px; }
.radio { width: 40px; height: 40px; border: 4px solid #bdbdbd; border-radius: 50%; background: #fff; }
.radio.on { border-color: #757575; background: radial-gradient(circle, #757575 9.500px, #fff 10.500px); }
.gutter { width: 28px; padding: 874px 0 0 5px; }
.thumb { width: 15px; height: 101px; border-radius: 8px; background: #c1c1c1; }

/* Desktop and dock */
.desktop {
  height: 122px;
  flex: none;
  padding: 14px 73px 0;
  background: linear-gradient(90deg, #05060e, #08080d 50%, #181113 75%, #2f2123);
}
.dock {
  height: 108px;
  display: flex;
  padding-left: 3px;
  border: 2px solid #43444d;
  border-bottom: 0;
  border-radius: 14px 14px 0 0;
  background: linear-gradient(90deg, #171923, #181a24 45%, #211d24 70%, #2e2126 85%, #332427);
}
.ic { width: 89.400px; height: 106px; }
.sep { width: 40.500px; height: 81px; margin-top: 12px; background: linear-gradient(#6a6268, #6a6268) center / 2px 100% no-repeat; }
.bt, .oct, .day, .d3, .tv, .xl { font-family: Inter, sans-serif; text-anchor: middle; fill: #fff; }
.bt { font-size: 17px; }
.oct { font-size: 14px; }
.day { font-size: 38px; font-weight: 300; fill: #222; }
.d3 { font-size: 11px; fill: #333; }
.tv { font-size: 29px; font-weight: 500; text-anchor: start; }
.xl { font-size: 27px; font-weight: 700; }
.petals rect { mix-blend-mode: multiply; }
```
